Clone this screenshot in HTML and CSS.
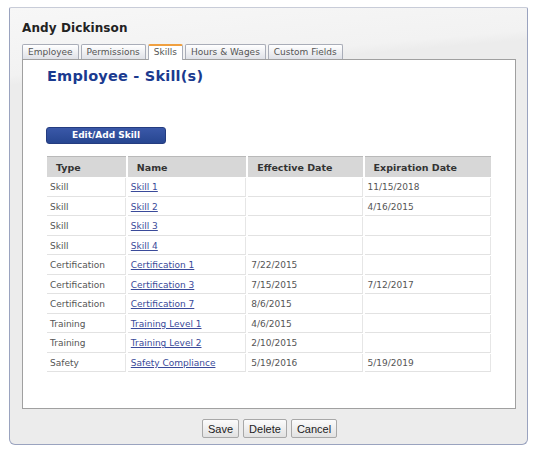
FILE: index.html
```html
<!DOCTYPE html>
<html>
<head>
<meta charset="utf-8">
<link rel="stylesheet" href="styles.css">
</head>
<body>
<div class="panel">
  <div class="title">Andy Dickinson</div>
  <div class="tabs">
    <div class="tab">Employee</div>
    <div class="tab">Permissions</div>
    <div class="tab active">Skills</div>
    <div class="tab">Hours &amp; Wages</div>
    <div class="tab">Custom Fields</div>
  </div>
  <div class="content">
    <h1 class="heading">Employee - Skill(s)</h1>
    <button class="primary">Edit/Add Skill</button>
    <table class="grid">
      <thead>
        <tr><th class="c1">Type</th><th class="c2">Name</th><th class="c3">Effective Date</th><th class="c4">Expiration Date</th></tr>
      </thead>
      <tbody>
        <tr><td>Skill</td><td><a href="#">Skill 1</a></td><td></td><td>11/15/2018</td></tr>
        <tr><td>Skill</td><td><a href="#">Skill 2</a></td><td></td><td>4/16/2015</td></tr>
        <tr><td>Skill</td><td><a href="#">Skill 3</a></td><td></td><td></td></tr>
        <tr><td>Skill</td><td><a href="#">Skill 4</a></td><td></td><td></td></tr>
        <tr><td>Certification</td><td><a href="#">Certification 1</a></td><td>7/22/2015</td><td></td></tr>
        <tr><td>Certification</td><td><a href="#">Certification 3</a></td><td>7/15/2015</td><td>7/12/2017</td></tr>
        <tr><td>Certification</td><td><a href="#">Certification 7</a></td><td>8/6/2015</td><td></td></tr>
        <tr><td>Training</td><td><a href="#">Training Level 1</a></td><td>4/6/2015</td><td></td></tr>
        <tr><td>Training</td><td><a href="#">Training Level 2</a></td><td>2/10/2015</td><td></td></tr>
        <tr><td>Safety</td><td><a href="#">Safety Compliance</a></td><td>5/19/2016</td><td>5/19/2019</td></tr>
      </tbody>
    </table>
  </div>
  <div class="actions">
    <button class="btn">Save</button>
    <button class="btn">Delete</button>
    <button class="btn">Cancel</button>
  </div>
</div>
</body>
</html>
```

FILE: styles.css
```css
html, body {
  margin: 0;
  padding: 0;
  background: #ffffff;
}
body {
  font-family: "DejaVu Sans", Verdana, sans-serif;
  font-size: 9px;
  color: #444;
}
.panel {
  box-sizing: border-box;
  margin: 7px 0 0 9px;
  width: 519px;
  height: 438px;
  border: 1px solid #9aa3bf;
  border-top-color: #c8ccd8;
  border-radius: 2px 2px 6px 6px;
  background: linear-gradient(175deg, #f7f7f7 0%, #f2f2f2 14%, #ececec 16%, #ececec 100%);
  padding: 0 0 0 12px;
}
.title {
  font-size: 12px;
  font-weight: bold;
  color: #222;
  padding-top: 13px;
  height: 22px;
  letter-spacing: 0.1px;
}
.tabs {
  display: flex;
  gap: 2px;
  height: 15px;
  margin-top: 1px;
  align-items: flex-end;
}
.tab {
  box-sizing: border-box;
  height: 15px;
  padding: 0 5px;
  border: 1px solid #a9adb8;
  border-bottom: none;
  border-radius: 2px 2px 0 0;
  background: linear-gradient(#ffffff, #dfe1e7);
  color: #555;
  line-height: 14px;
}
.tab.active {
  height: 16px;
  background: #ffffff;
  border-top: 2px solid #f0a040;
  line-height: 13px;
  position: relative;
  z-index: 1;
  margin-bottom: -1px;
}
.content {
  box-sizing: border-box;
  width: 494px;
  height: 350px;
  background: #fff;
  border: 1px solid #a0a0a0;
  padding: 7px 0 0 23px;
}
.heading {
  margin: 0 0 0 1px;
  font-size: 14.5px;
  font-weight: bold;
  color: #1a3a8f;
  line-height: 18px;
  letter-spacing: 0.2px;
}
.primary {
  display: block;
  margin-top: 42px;
  width: 120px;
  height: 17px;
  border: 1px solid #243c80;
  border-radius: 3px;
  background: linear-gradient(#3a58a8, #274691);
  color: #fff;
  font-family: "DejaVu Sans", Verdana, sans-serif;
  font-size: 9px;
  font-weight: bold;
  padding: 0;
  line-height: 15px;
}
.grid {
  margin-top: 11px;
  margin-left: -1px;
  border-collapse: separate;
  border-spacing: 2px 1px;
  width: 448px;
}
.grid th {
  box-sizing: border-box;
  background: #d7d7d7;
  border-top: 1px solid #b9b9b9;
  text-align: left;
  font-weight: bold;
  color: #333;
  height: 21px;
  padding: 0 0 0 9px;
  font-size: 9.5px;
}
.grid th.c1 { width: 79px; }
.grid th.c2 { width: 119px; }
.grid th.c3 { width: 115px; }
.grid th.c4 { width: 127px; }
.grid td {
  box-sizing: border-box;
  height: 18.5px;
  padding: 1px 0 0 3px;
  border-right: 1px solid #e6e6e6;
  border-bottom: 1px solid #e2e2e2;
  color: #555;
}
.grid a {
  color: #3a4a9a;
  text-decoration: underline;
}
.actions {
  display: flex;
  gap: 4px;
  justify-content: flex-start;
  padding: 10px 0 0 180px;
}
.btn {
  box-sizing: border-box;
  height: 19px;
  padding: 0 5px;
  border: 1px solid #a8a8a8;
  border-radius: 2px;
  background: linear-gradient(#fbfbfb, #e2e2e2);
  font-family: "Liberation Sans", Arial, sans-serif;
  font-size: 11px;
  color: #222;
}
```
